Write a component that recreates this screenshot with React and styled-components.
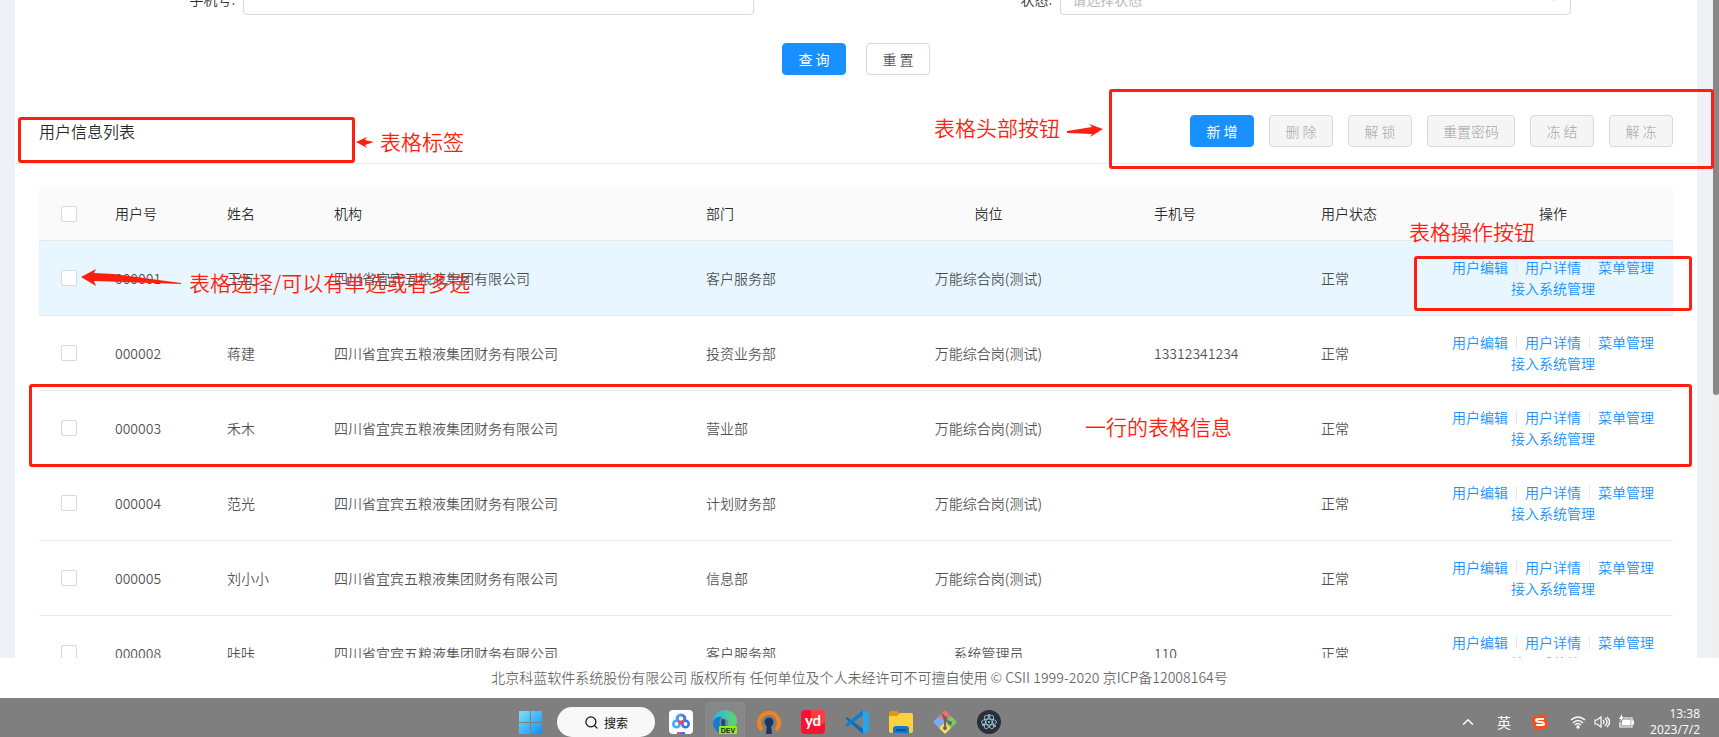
import React from "react";
import styled, { createGlobalStyle } from "styled-components";
import { ChevronDown, ChevronUp, Search } from "lucide-react";

const RED = "#ff1f10";

const columns = [
  { title: "用户号", width: 112 },
  { title: "姓名", width: 107 },
  { title: "机构", width: 372 },
  { title: "部门", width: 149 },
  { title: "岗位", width: 299, center: true },
  { title: "手机号", width: 167 },
  { title: "用户状态", width: 128 },
  { title: "操作", width: 240, center: true },
];

const users = [
  { id: "000001", name: "王五", org: "四川省宜宾五粮液集团有限公司", dept: "客户服务部", post: "万能综合岗(测试)", phone: "", hover: true },
  { id: "000002", name: "蒋建", org: "四川省宜宾五粮液集团财务有限公司", dept: "投资业务部", post: "万能综合岗(测试)", phone: "13312341234" },
  { id: "000003", name: "禾木", org: "四川省宜宾五粮液集团财务有限公司", dept: "营业部", post: "万能综合岗(测试)", phone: "" },
  { id: "000004", name: "范光", org: "四川省宜宾五粮液集团财务有限公司", dept: "计划财务部", post: "万能综合岗(测试)", phone: "" },
  { id: "000005", name: "刘小小", org: "四川省宜宾五粮液集团财务有限公司", dept: "信息部", post: "万能综合岗(测试)", phone: "" },
  { id: "000008", name: "咔咔", org: "四川省宜宾五粮液集团财务有限公司", dept: "客户服务部", post: "系统管理员", phone: "110" },
];

const tools = ["删 除", "解 锁", "重置密码", "冻 结", "解 冻"];

export default function App() {
  return (
    <Page>
      <GlobalStyle />
      <Body>
        <Content>
          <SearchForm>
            <FormRow>
              <Field>
                <Label htmlFor="phone">手机号:</Label>
                <TextInput id="phone" type="text" />
              </Field>
              <Field>
                <Label htmlFor="status">状态:</Label>
                <SelectWrap>
                  <Select id="status" defaultValue="">
                    <option value="">请选择状态</option>
                    <option value="1">正常</option>
                  </Select>
                  <ChevronDown size={12} />
                </SelectWrap>
              </Field>
            </FormRow>
            <FormActions>
              <Button $primary>查 询</Button>
              <Button>重 置</Button>
            </FormActions>
          </SearchForm>
          <CardHead>
            <Title>用户信息列表</Title>
            <Toolbar>
              <Button $primary>新 增</Button>
              {tools.map((t) => (
                <Button key={t} disabled>
                  {t}
                </Button>
              ))}
            </Toolbar>
          </CardHead>
          <TableWrap>
            <UserTable />
          </TableWrap>
        </Content>
        <ScrollTrack>
          <ScrollThumb />
        </ScrollTrack>
      </Body>
      <Footer>
        北京科蓝软件系统股份有限公司 版权所有 任何单位及个人未经许可不可擅自使用 © CSII 1999-2020 京ICP备12008164号
      </Footer>
      <TaskBar />
      <Notes />
    </Page>
  );
}

function UserTable() {
  return (
    <Table>
      <colgroup>
        <Col $w={60} />
        {columns.map((c) => (
          <Col key={c.title} $w={c.width} />
        ))}
      </colgroup>
      <thead>
        <tr>
          <Th $center>
            <Check type="checkbox" aria-label="全选" />
          </Th>
          {columns.map((c) => (
            <Th key={c.title} $center={c.center}>
              {c.title}
            </Th>
          ))}
        </tr>
      </thead>
      <tbody>
        {users.map((u) => (
          <Row key={u.id} $hover={u.hover}>
            <Td $center>
              <Check type="checkbox" aria-label={u.id} />
            </Td>
            <Td>{u.id}</Td>
            <Td>{u.name}</Td>
            <Td>{u.org}</Td>
            <Td>{u.dept}</Td>
            <Td $center>{u.post}</Td>
            <Td>{u.phone}</Td>
            <Td>正常</Td>
            <Td $center>
              <Actions>
                <Action href="#edit">用户编辑</Action>
                <Divider />
                <Action href="#detail">用户详情</Action>
                <Divider />
                <Action href="#menu">菜单管理</Action>
              </Actions>
              <Actions>
                <Action href="#system">接入系统管理</Action>
              </Actions>
            </Td>
          </Row>
        ))}
      </tbody>
    </Table>
  );
}

function Notes() {
  return (
    <NoteLayer>
      <NoteBox $x={18} $y={117} $w={337} $h={46} />
      <NoteBox $x={1109} $y={89} $w={605} $h={80} />
      <NoteBox $x={1414} $y={256} $w={278} $h={55} />
      <NoteBox $x={29} $y={384} $w={1663} $h={83} />
      <NoteText $x={380} $y={127}>表格标签</NoteText>
      <NoteText $x={934} $y={113}>表格头部按钮</NoteText>
      <NoteText $x={1409} $y={217}>表格操作按钮</NoteText>
      <NoteText $x={1085} $y={412}>一行的表格信息</NoteText>
      <NoteText $x={189} $y={268}>表格选择/可以有单选或者多选</NoteText>
      <Arrow $x={356} $y={136} width="18" height="13" viewBox="0 0 18 13">
        <path d="M0 6 L11 1 L9 4 L18 6 L9 9 L11 12 Z" />
      </Arrow>
      <Arrow $x={1067} $y={123} width="36" height="15" viewBox="0 0 36 15">
        <path d="M36 6 L22 1 L25 4 L0 8 L0 10 L25 11 L23 14 Z" />
      </Arrow>
      <Arrow $x={80} $y={268} width="102" height="20" viewBox="0 0 102 20">
        <path d="M1 9 L16 1 L14 5 L34 6 L101 15 L101 16 L14 13 L16 18 Z" />
      </Arrow>
    </NoteLayer>
  );
}

function TaskBar() {
  return (
    <Bar>
      <Apps>
        <AppButton aria-label="开始">
          <svg width="24" height="24" viewBox="0 0 24 24">
            <defs>
              <linearGradient id="win" x1="0" y1="0" x2="1" y2="1">
                <stop offset="0" stopColor="#7fe0fb" />
                <stop offset="1" stopColor="#0a91f5" />
              </linearGradient>
            </defs>
            <path fill="url(#win)" d="M0 1h11v11H0zM12 1h11v11H12zM0 13h11v11H0zM12 13h11v11H12z" />
          </svg>
        </AppButton>
        <SearchPill>
          <Search size={15} strokeWidth={2} />
          搜索
        </SearchPill>
        <AppButton aria-label="网盘">
          <svg width="24" height="24" viewBox="0 0 24 24">
            <rect width="24" height="24" rx="4" fill="#fff" />
            <g fill="none" strokeWidth="2.500">
              <circle cx="7.500" cy="14" r="3.200" stroke="#2fb2f5" />
              <circle cx="16.500" cy="14" r="3.200" stroke="#2f76f5" />
              <circle cx="12" cy="8.500" r="3.500" stroke="#f5465c" />
              <path d="M9 11 A3.500 3.500 0 0 1 12 5" stroke="#3fa8f8" />
              <path d="M12 5 A3.500 3.500 0 0 1 15 11" stroke="#3a86f5" />
              <path d="M10 14l4-3" stroke="#f5465c" />
            </g>
            <path d="M8 22h4v2H8z" fill="#f5465c" />
            <path d="M12 22h4v2h-4z" fill="#2f76f5" />
          </svg>
        </AppButton>
        <AppButton $active aria-label="Edge Dev">
          <svg width="24" height="24" viewBox="0 0 24 24">
            <defs>
              <linearGradient id="edge" x1="0" y1="0" x2="1" y2="0">
                <stop offset="0" stopColor="#27b6e8" />
                <stop offset="1" stopColor="#5fd66c" />
              </linearGradient>
            </defs>
            <path fill="url(#edge)" d="M0 12C0 5 5 0 12 0s12 5 12 11c0 4-3 6-6 6-3 0-4-1-3-3 1-3-1-6-5-6-5 0-9 2-10 4z" />
            <path fill="#1879cc" d="M0 12c1-4 5-6 9-5-2 2-3 4-2 8 1 4 4 7 9 8C8 26 0 21 0 12z" />
            <path fill="#0f4f97" d="M9 9c-2 3-1 8 3 11h6v-3c-4 1-6-1-6-3 0-2 1-3 0-4-1-1-2-1-3-1z" />
            <rect x="6" y="16" width="18" height="8" rx="1" fill="#93f205" />
            <text x="15" y="23" textAnchor="middle" fontSize="7" fontWeight="700" fontFamily="Liberation Sans, sans-serif" fill="#123">
              DEV
            </text>
          </svg>
        </AppButton>
        <AppButton aria-label="OpenVPN">
          <svg width="24" height="24" viewBox="0 0 24 24">
            <path d="M5 20a10 10 0 1 1 14 0" fill="none" stroke="#f58220" strokeWidth="4" />
            <circle cx="12" cy="12" r="4.500" fill="#1a3764" />
            <path d="M10 14h4l1 10H9z" fill="#1a3764" />
          </svg>
        </AppButton>
        <AppButton aria-label="有道">
          <svg width="24" height="24" viewBox="0 0 24 24">
            <rect width="24" height="24" rx="4" fill="#fa1134" />
            <path d="M10 0h10q4 0 4 4v8q-4 4-9 2-6-4-5-14z" fill="#fc3d40" />
            <text x="12" y="16" textAnchor="middle" fontSize="15" fontWeight="700" fontFamily="Lato, sans-serif" fill="#fff">
              yd
            </text>
          </svg>
        </AppButton>
        <AppButton aria-label="VS Code">
          <svg width="24" height="24" viewBox="0 0 24 24">
            <path fill="#0b6db8" d="M0 9l2-2 16 12v5L1 9z" />
            <path fill="#0b7fd0" d="M0 15l2 2L18 5V0L1 14z" />
            <path fill="#27a5f2" d="M18 0l6 3v18l-6 3z" />
          </svg>
        </AppButton>
        <AppButton aria-label="文件资源管理器">
          <svg width="24" height="24" viewBox="0 0 24 24">
            <path fill="#dc9a10" d="M0 3q0-2 2-2h6l3 3-2 5H0z" />
            <path fill="#fdd043" d="M0 6h8l3-3h11q2 0 2 2v16q0 2-2 2H2q-2 0-2-2z" />
            <path fill="#1177cf" d="M4 23v-4q0-3 3-3h10q3 0 3 3v4z" />
            <path fill="#0a559f" d="M7 19h10v2H7z" />
          </svg>
        </AppButton>
        <AppButton aria-label="Git">
          <svg width="24" height="24" viewBox="0 0 24 24">
            <path fill="#f07070" d="M12 0l6 6-6 6-6-6z" />
            <path fill="#80a8f8" d="M6 6l6 6-6 6-6-6z" />
            <path fill="#80c860" d="M18 6l6 6-6 6-6-6z" />
            <path fill="#fadc60" d="M12 12l6 6-6 6-6-6z" />
            <path d="M9 4l3 4v12M12 9l5 4" fill="none" stroke="#666" strokeWidth="2" />
            <circle cx="12" cy="8" r="2" fill="#666" />
            <circle cx="12" cy="18" r="2" fill="#666" />
            <circle cx="17" cy="13" r="2" fill="#666" />
          </svg>
        </AppButton>
        <AppButton aria-label="Electron">
          <svg width="24" height="24" viewBox="0 0 24 24">
            <circle cx="12" cy="12" r="12" fill="#2b2e3a" />
            <g fill="none" stroke="#a5dce8" strokeWidth="0.800">
              <ellipse cx="12" cy="12" rx="7.500" ry="3" />
              <ellipse cx="12" cy="12" rx="7.500" ry="3" transform="rotate(60 12 12)" />
              <ellipse cx="12" cy="12" rx="7.500" ry="3" transform="rotate(120 12 12)" />
            </g>
            <circle cx="12" cy="12" r="1" fill="#a5dce8" />
            <circle cx="6" cy="15" r="1" fill="#a5dce8" />
            <circle cx="18" cy="16" r="1" fill="#a5dce8" />
            <circle cx="12" cy="5" r="1" fill="#a5dce8" />
          </svg>
        </AppButton>
      </Apps>
      <Tray>
        <TrayButton aria-label="显示隐藏的图标">
          <ChevronUp size={18} />
        </TrayButton>
        <TrayButton>英</TrayButton>
        <TrayButton aria-label="搜狗输入法">
          <svg width="16" height="16" viewBox="0 0 16 16">
            <path fill="#f4511e" d="M0 4q0-2 2-2L12 0q2 0 2 1l2 11q0 2-1 2L4 16q-2 0-2-1z" />
            <path d="M12 5H7q-3 0-3 1 0 2 4 2t4 2q0 1-3 1H4" fill="none" stroke="#fff" strokeWidth="2" />
          </svg>
        </TrayButton>
        <Status>
          <svg width="16" height="16" viewBox="0 0 16 16" fill="none" stroke="#fff" strokeWidth="1.300">
            <path d="M1 6q7-6 14 0M3 9q5-5 10 0M5 11q3-3 6 0" />
            <circle cx="8" cy="13" r="1" fill="#fff" />
          </svg>
          <svg width="16" height="16" viewBox="0 0 16 16" fill="none" stroke="#fff" strokeWidth="1.200">
            <path d="M1 6h2l4-3v10l-4-3H1zM9 6q2 2 0 4M11 4q4 4 0 8M13 3q5 5 0 10" />
          </svg>
          <svg width="16" height="16" viewBox="0 0 16 16" fill="none" stroke="#fff" strokeWidth="1.200">
            <path d="M6 4h8v9H2V8" />
            <path d="M5 6h7v5H4zM14 7h2v3h-2z" fill="#fff" />
            <path d="M4 0L1 5h2L2 8l4-5H4z" fill="#fff" stroke="none" />
          </svg>
        </Status>
        <Clock>
          <span>13:38</span>
          <span>2023/7/2</span>
        </Clock>
      </Tray>
    </Bar>
  );
}

const GlobalStyle = createGlobalStyle`
  * {
    box-sizing: border-box;
  }
  body {
    margin: 0;
    font-family: "Noto Sans CJK SC", sans-serif;
    font-size: 14px;
    line-height: 21px;
    font-weight: 350;
    color: rgba(0, 0, 0, 0.7);
  }
  button, input, select {
    font: inherit;
  }
`;
const Page = styled.div`
  position: relative;
  display: flex;
  flex-direction: column;
  height: 100vh;
  overflow: hidden;
  background: #fff;
`;
const Body = styled.div`
  display: flex;
  flex: 1;
  min-height: 0;
  background: #f0f1f6;
  padding-left: 15px;
  overflow: hidden;
`;
const Content = styled.main`
  flex: 1;
  min-width: 0;
  margin-right: 16px;
  background: #fff;
  overflow: hidden;
`;
const SearchForm = styled.form`
  padding: 0 24px;
  margin-top: -17px;
`;
const FormRow = styled.div`
  display: grid;
  grid-template-columns: 1fr 1fr;
`;
const Field = styled.div`
  display: grid;
  grid-template-columns: 25% 62.5%;
  align-items: center;
`;
const Label = styled.label`
  text-align: right;
  padding-right: 8px;
  color: rgba(0, 0, 0, 0.85);
`;
const TextInput = styled.input`
  width: 100%;
  height: 32px;
  padding: 0 11px;
  border: 1px solid #d9d9d9;
  border-radius: 4px;
`;
const SelectWrap = styled.div`
  position: relative;
  svg {
    position: absolute;
    right: 11px;
    top: 10px;
    color: #bfbfbf;
  }
`;
const Select = styled.select`
  display: block;
  width: 100%;
  height: 32px;
  padding: 0 11px;
  border: 1px solid #d9d9d9;
  border-radius: 4px;
  background: #fff;
  color: #b5b5b5;
  appearance: none;
`;
const FormActions = styled.div`
  display: flex;
  justify-content: center;
  gap: 20px;
  padding: 28px 0 24px;
`;
const Button = styled.button.attrs({ type: "button" })`
  height: 32px;
  min-width: 64px;
  padding: 0 15px;
  border: 1px solid ${(p) => (p.$primary ? "#1890ff" : "#d9d9d9")};
  border-radius: 4px;
  background: ${(p) => (p.$primary ? "#1890ff" : "#fff")};
  color: ${(p) => (p.$primary ? "#fff" : "rgba(0, 0, 0, 0.7)")};
  box-shadow: 0 2px 0 rgba(0, 0, 0, 0.02);
  font-weight: ${(p) => (p.$primary ? 400 : "inherit")};
  white-space: nowrap;
  &:disabled {
    background: #f5f5f5;
    color: rgba(0, 0, 0, 0.3);
    box-shadow: none;
  }
`;
const CardHead = styled.div`
  display: flex;
  justify-content: space-between;
  align-items: center;
  padding: 16px 24px;
  border-bottom: 1px solid #e8e8e8;
`;
const Title = styled.h2`
  margin: 0;
  font-size: 16px;
  line-height: 24px;
  font-weight: inherit;
  color: rgba(0, 0, 0, 0.85);
`;
const Toolbar = styled.div`
  display: flex;
  gap: 15px;
`;
const TableWrap = styled.div`
  padding: 23px 24px;
`;
const Table = styled.table`
  width: 100%;
  table-layout: fixed;
  border-collapse: separate;
  border-spacing: 0;
`;
const Col = styled.col`
  width: ${(p) => p.$w}px;
`;
const Th = styled.th`
  padding: 16px;
  background: #fafafa;
  border-bottom: 1px solid #e8e8e8;
  color: rgba(0, 0, 0, 0.85);
  font-weight: inherit;
  text-align: ${(p) => (p.$center ? "center" : "left")};
  &:first-child {
    border-top-left-radius: 4px;
  }
  &:last-child {
    border-top-right-radius: 4px;
  }
`;
const Row = styled.tr`
  background: ${(p) => (p.$hover ? "#e8f7ff" : "#fff")};
`;
const Td = styled.td`
  padding: 16px;
  border-bottom: 1px solid #e8e8e8;
  text-align: ${(p) => (p.$center ? "center" : "left")};
  white-space: nowrap;
`;
const Check = styled.input`
  appearance: none;
  display: block;
  width: 16px;
  height: 16px;
  margin: 0 auto;
  border: 1px solid #d9d9d9;
  border-radius: 2px;
  background: #fff;
`;
const Actions = styled.div`
  display: flex;
  justify-content: center;
  align-items: center;
`;
const Action = styled.a`
  color: #1890ff;
  text-decoration: none;
`;
const Divider = styled.span`
  width: 1px;
  height: 13px;
  margin: 0 8px;
  background: #e8e8e8;
`;
const ScrollTrack = styled.div`
  width: 6px;
  background: #efefef;
`;
const ScrollThumb = styled.div`
  height: 60%;
  border-radius: 0 0 3px 3px;
  background: #888;
`;
const Footer = styled.footer`
  padding: 9px 0 10px;
  text-align: center;
  color: rgba(0, 0, 0, 0.6);
  white-space: nowrap;
`;
const NoteLayer = styled.div`
  position: absolute;
  inset: 0;
  pointer-events: none;
`;
const NoteBox = styled.div`
  position: absolute;
  left: ${(p) => p.$x}px;
  top: ${(p) => p.$y}px;
  width: ${(p) => p.$w}px;
  height: ${(p) => p.$h}px;
  border: 3px solid ${RED};
  border-radius: 3px;
`;
const NoteText = styled.span`
  position: absolute;
  left: ${(p) => p.$x}px;
  top: ${(p) => p.$y}px;
  color: ${RED};
  font-size: 21px;
  line-height: 28px;
  white-space: nowrap;
`;
const Arrow = styled.svg`
  position: absolute;
  left: ${(p) => p.$x}px;
  top: ${(p) => p.$y}px;
  fill: ${RED};
`;
const Bar = styled.nav`
  display: flex;
  justify-content: space-between;
  align-items: flex-start;
  height: 39px;
  overflow: hidden;
  padding: 0 19px 0 511px;
  background: #7f7f7f;
`;
const Apps = styled.div`
  display: flex;
  align-items: center;
  gap: 4px;
  height: 48px;
`;
const AppButton = styled.button.attrs({ type: "button" })`
  display: flex;
  align-items: center;
  justify-content: center;
  width: 40px;
  height: 40px;
  padding: 0;
  border: 1px solid ${(p) => (p.$active ? "#8b8b8b" : "transparent")};
  border-radius: 4px;
  background: ${(p) => (p.$active ? "#878787" : "transparent")};
`;
const SearchPill = styled.button.attrs({ type: "button" })`
  display: flex;
  align-items: center;
  justify-content: center;
  gap: 5px;
  width: 98px;
  height: 30px;
  margin: 0 2px;
  padding: 0;
  border: 0;
  border-radius: 15px;
  background: #f8f8f8;
  color: #111;
  font-size: 12px;
  font-weight: 400;
`;
const Tray = styled.div`
  display: flex;
  align-items: center;
  height: 48px;
  color: #fff;
`;
const TrayButton = styled.button.attrs({ type: "button" })`
  display: flex;
  align-items: center;
  justify-content: center;
  width: 36px;
  height: 40px;
  padding: 0;
  border: 0;
  background: transparent;
  color: #fff;
  font-weight: 400;
`;
const Status = styled.div`
  display: flex;
  gap: 8px;
  padding: 0 16px 0 12px;
`;
const Clock = styled.div`
  display: flex;
  flex-direction: column;
  align-items: flex-end;
  font-family: "Open Sans", "Noto Sans CJK SC", sans-serif;
  font-size: 12px;
  font-weight: 400;
  line-height: 16px;
`;
